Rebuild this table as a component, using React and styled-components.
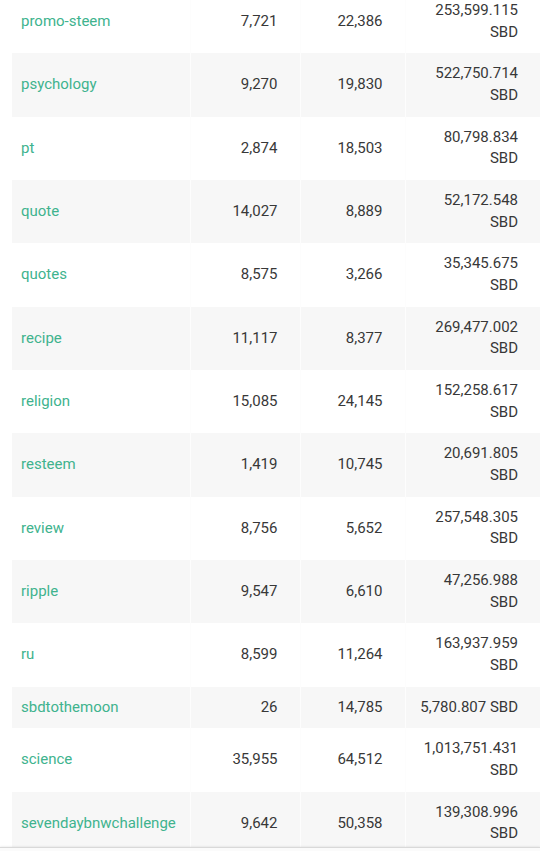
import React from "react";
import styled, { createGlobalStyle } from "styled-components";

const rows = [
  ["promo-steem", "7,721", "22,386", "253,599.115"],
  ["psychology", "9,270", "19,830", "522,750.714"],
  ["pt", "2,874", "18,503", "80,798.834"],
  ["quote", "14,027", "8,889", "52,172.548"],
  ["quotes", "8,575", "3,266", "35,345.675"],
  ["recipe", "11,117", "8,377", "269,477.002"],
  ["religion", "15,085", "24,145", "152,258.617"],
  ["resteem", "1,419", "10,745", "20,691.805"],
  ["review", "8,756", "5,652", "257,548.305"],
  ["ripple", "9,547", "6,610", "47,256.988"],
  ["ru", "8,599", "11,264", "163,937.959"],
  ["sbdtothemoon", "26", "14,785", "5,780.807"],
  ["science", "35,955", "64,512", "1,013,751.431"],
  ["sevendaybnwchallenge", "9,642", "50,358", "139,308.996"],
];

const GlobalStyle = createGlobalStyle`
  html, body {
    margin: 0;
    padding: 0;
    background: #fff;
    font-family: Roboto, "Noto Sans", Arial, sans-serif;
    overflow: hidden;
  }
`;

const Page = styled.div`
  height: 851px;
  overflow: hidden;
`;

const Table = styled.table`
  width: 528px;
  margin: -10px 0 0 12px;
  border-collapse: collapse;
  table-layout: fixed;
  font-size: 15px;
  line-height: 21.67px;
  color: #383838;
`;

const Row = styled.tr`
  &:nth-child(even) {
    background: #f7f7f7;
  }
`;

const NameCell = styled.td`
  padding: 10px 8px 10px 9px;
  vertical-align: middle;
`;

const NumCell = styled.td`
  padding: 10px 22px 10px 11px;
  text-align: right;
  vertical-align: middle;
  border-left: 1px solid #fdfdfd;
`;

const TagLink = styled.a`
  color: #40b38e;
  text-decoration: none;
`;

const BottomEdge = styled.div`
  position: fixed;
  left: 0;
  right: 0;
  bottom: 0;
  height: 3px;
  background: #fbfbfb;
  border-top: 1px solid #d9d9d9;
  box-shadow: 0 -1px 2px rgba(0, 0, 0, 0.06);
`;

export default function App() {
  return (
    <Page>
      <GlobalStyle />
      <Table>
        <colgroup>
          <col style={{ width: 178 }} />
          <col style={{ width: 110 }} />
          <col style={{ width: 105 }} />
          <col style={{ width: 135 }} />
        </colgroup>
        <tbody>
          {rows.map(([tag, posts, authors, payout]) => (
            <Row key={tag}>
              <NameCell>
                <TagLink href="#">{tag}</TagLink>
              </NameCell>
              <NumCell>{posts}</NumCell>
              <NumCell>{authors}</NumCell>
              <NumCell>{payout} SBD</NumCell>
            </Row>
          ))}
        </tbody>
      </Table>
      <BottomEdge />
    </Page>
  );
}
